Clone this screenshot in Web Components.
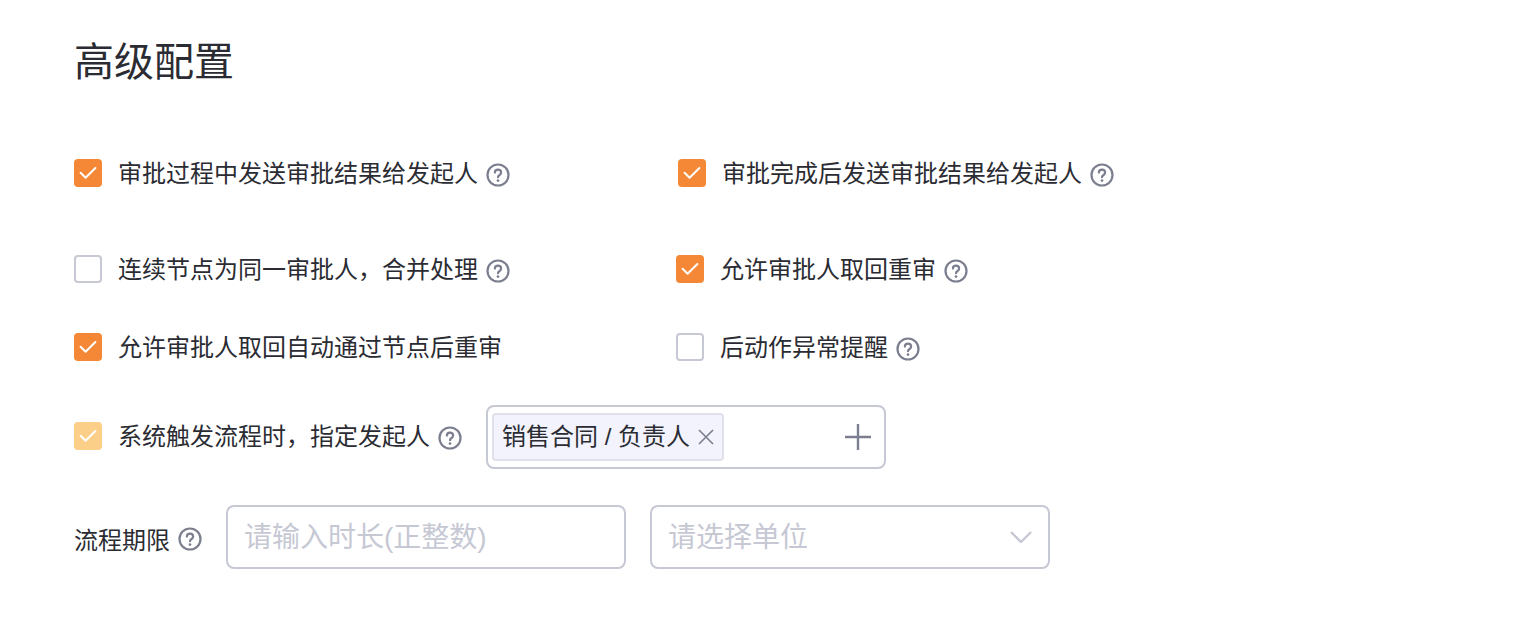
<!DOCTYPE html>
<html lang="zh-CN"><head><meta charset="utf-8"><title>高级配置</title>
<style>
html,body{margin:0;padding:0;background:#fff}
body{font-family:"Liberation Sans","Noto Sans CJK SC",sans-serif;color:#2b2c33;font-size:24px}
</style></head><body>
<x-config>
  <x-row pad="0" col="604"><x-check checked help>审批过程中发送审批结果给发起人</x-check><x-check checked help>审批完成后发送审批结果给发起人</x-check></x-row>
  <x-row pad="68" col="602"><x-check help>连续节点为同一审批人&#xFF0C;合并处理</x-check><x-check checked help>允许审批人取回重审</x-check></x-row>
  <x-row pad="50" col="602"><x-check checked>允许审批人取回自动通过节点后重审</x-check><x-check help>后动作异常提醒</x-check></x-row>
  <x-row pad="44" gap="24"><x-check checked disabled help>系统触发流程时&#xFF0C;指定发起人</x-check><x-tag-input><x-tag>销售合同 / 负责人</x-tag></x-tag-input></x-row>
  <x-row pad="36" gap="24"><x-label>流程期限</x-label><x-field placeholder="请输入时长(正整数)"></x-field><x-field placeholder="请选择单位" select></x-field></x-row>
</x-config>
<script>
const def=(n,html)=>customElements.define(n,class extends HTMLElement{
  connectedCallback(){ if(this.shadowRoot)return; const s=this.attachShadow({mode:'open'}); s.innerHTML=typeof html==='function'?html(this):html;}
});
const helpIcon=`<svg part="help" width="24" height="24" viewBox="0 0 24 24" fill="none" style="display:block;flex:none"><circle cx="12" cy="12" r="10.5" stroke="#7b7e8e" stroke-width="2.2"/><path d="M8.9 9.6c0-1.8 1.3-3 3.1-3s3.1 1.2 3.1 2.8c0 1.2-.6 1.9-1.6 2.6-.9.6-1.5 1.1-1.5 2.2" stroke="#7b7e8e" stroke-width="2.2" stroke-linecap="round"/><circle cx="12" cy="17.6" r="1.35" fill="#7b7e8e"/></svg>`;
def('x-config',`<style>:host{display:block;padding:33px 0 0 74px;box-sizing:border-box;height:632px;overflow:hidden}
h1{margin:1px 0 69px;font-weight:400;font-size:40px;line-height:56px;color:#2b2c33}</style><h1>高级配置</h1><slot></slot>`);
def('x-row',e=>`<style>:host{display:flex;align-items:center;padding-top:${e.getAttribute('pad')||0}px;gap:${e.getAttribute('gap')||0}px}
::slotted(x-check[disabled]){margin-top:-2px}
${e.getAttribute('col')?`::slotted(:first-child){width:${e.getAttribute('col')}px;flex:none}`:''}</style><slot></slot>`);
def('x-check',e=>{
  const c=e.hasAttribute('checked'),d=e.hasAttribute('disabled');
  const bg=c?(d?'#fbcf87':'#f58837'):'#fff',bd=c?'none':'2px solid #c6c8d4';
  return `<style>:host{display:flex;align-items:center;height:28px;color:#2b2c33;white-space:nowrap}
  .b{width:28px;height:28px;box-sizing:border-box;border-radius:4px;background:${bg};border:${bd};flex:none;margin-right:16px;display:flex;align-items:center;justify-content:center}
  .t{line-height:30px;height:30px;padding-top:2px}
  .h{margin-left:8px;margin-top:4px}</style>
  <span class="b">${c?'<svg width="18" height="14" viewBox="0 0 18 14" fill="none"><path d="M1.6 6.8l5 5L16.4 2" stroke="#fff" stroke-width="2" stroke-linecap="round" stroke-linejoin="round"/></svg>':''}</span><span class="t"><slot></slot></span>${e.hasAttribute('help')?`<span class="h">${helpIcon}</span>`:''}`;
});
def('x-label',`<style>:host{display:flex;align-items:center;gap:8px;white-space:nowrap;color:#2b2c33;margin-top:4px}
span{line-height:34px;margin-top:3px}</style><span><slot></slot></span>${helpIcon}`);
def('x-tag-input',`<style>:host{display:flex;align-items:center;justify-content:space-between;width:400px;height:64px;box-sizing:border-box;border:2px solid #c6c8d4;border-radius:8px;padding:0 12px 0 4px;background:#fff}</style>
<slot></slot><svg width="28" height="28" viewBox="0 0 28 28" fill="none"><path d="M14 1v26M1 14h26" stroke="#7b7e8e" stroke-width="2.4"/></svg>`);
def('x-tag',`<style>:host{display:flex;align-items:center;height:48px;box-sizing:border-box;border:2px solid #dfe0ea;border-radius:4px;background:#f2f3fc;padding:0 8px 0 8px;white-space:nowrap;color:#2b2c33}
span{line-height:28px;margin-top:-1px}svg{margin-left:8px}</style><span><slot></slot></span><svg width="16" height="16" viewBox="0 0 16 16" fill="none"><path d="M1 1l14 14M15 1L1 15" stroke="#7b7e8e" stroke-width="1.6"/></svg>`);
def('x-field',e=>`<style>:host{display:flex;align-items:center;justify-content:space-between;width:400px;height:64px;box-sizing:border-box;border:2px solid #c6c8d4;border-radius:8px;padding:0 16px 0 17px;font-size:28px;color:#c6c8d4;white-space:nowrap;background:#fff}
span{line-height:34px;margin:2px 0 0 -1px}</style>
<span>${e.getAttribute('placeholder')}</span>${e.hasAttribute('select')?'<svg width="22" height="12" viewBox="0 0 22 12" fill="none"><path d="M1 1l10 10L21 1" stroke="#c6c8d4" stroke-width="2.4"/></svg>':''}`);
</script>
</body></html>
